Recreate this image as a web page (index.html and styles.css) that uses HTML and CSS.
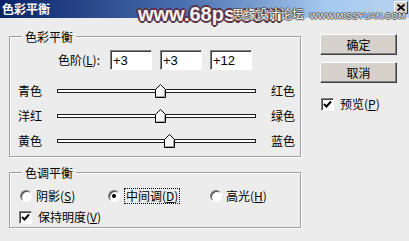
FILE: index.html
```html
<!DOCTYPE html>
<html lang="zh-CN">
<head>
    <meta charset="UTF-8">
    <title>色彩平衡</title>
    <link rel="stylesheet" href="styles.css">
</head>
<body>

<div class="dialog">
    <div class="titlebar">
        <span class="title">色彩平衡</span>
        <span class="close">
            <svg width="8" height="7" viewBox="0 0 8 7"><path d="M0.5 0.5 L7.5 6.5 M7.5 0.5 L0.5 6.5" stroke="#000" stroke-width="1.8"/></svg>
        </span>
    </div>

    <div class="watermark">www.68ps.com</div>
    <div class="watermark-small">思缘设计论坛 <span class="site">WWW.MISSYUAN.COM</span></div>

    <div class="content">
        <div class="main">
            <div class="group balance">
                <span class="group-title">色彩平衡</span>
                <div class="levels">
                    <span class="levels-label">色阶(<u>L</u>):</span>
                    <input class="field" type="text" value="+3">
                    <input class="field" type="text" value="+3">
                    <input class="field" type="text" value="+12">
                </div>
                <div class="slider-row">
                    <span class="lbl-left">青色</span>
                    <div class="track"><span class="thumb" style="left: 97px;"><svg width="11" height="14" viewBox="0 0 11 14"><polygon points="5.5,0.5 10.5,5.5 10.5,13.5 0.5,13.5 0.5,5.5" fill="#f7f7f7" stroke="#000"/><polyline points="9.5,6 9.5,12.5 1.5,12.5" fill="none" stroke="#a0a0a0"/></svg></span></div>
                    <span class="lbl-right">红色</span>
                </div>
                <div class="slider-row">
                    <span class="lbl-left">洋红</span>
                    <div class="track"><span class="thumb" style="left: 97px;"><svg width="11" height="14" viewBox="0 0 11 14"><polygon points="5.5,0.5 10.5,5.5 10.5,13.5 0.5,13.5 0.5,5.5" fill="#f7f7f7" stroke="#000"/><polyline points="9.5,6 9.5,12.5 1.5,12.5" fill="none" stroke="#a0a0a0"/></svg></span></div>
                    <span class="lbl-right">绿色</span>
                </div>
                <div class="slider-row">
                    <span class="lbl-left">黄色</span>
                    <div class="track"><span class="thumb" style="left: 106px;"><svg width="11" height="14" viewBox="0 0 11 14"><polygon points="5.5,0.5 10.5,5.5 10.5,13.5 0.5,13.5 0.5,5.5" fill="#f7f7f7" stroke="#000"/><polyline points="9.5,6 9.5,12.5 1.5,12.5" fill="none" stroke="#a0a0a0"/></svg></span></div>
                    <span class="lbl-right">蓝色</span>
                </div>
            </div>

            <div class="group tone">
                <span class="group-title">色调平衡</span>
                <div class="tones">
                    <label class="option"><span class="radio"></span>阴影(<u>S</u>)</label>
                    <label class="option"><span class="radio checked"></span><span class="focus">中间调(<u>D</u>)</span></label>
                    <label class="option"><span class="radio"></span>高光(<u>H</u>)</label>
                </div>
                <label class="option keep"><span class="checkbox checked"><svg width="9" height="9" viewBox="0 0 9 9"><path d="M1 4 L3.5 6.5 L8 1.5" fill="none" stroke="#000" stroke-width="2"/></svg></span>保持明度(<u>V</u>)</label>
            </div>
        </div>

        <div class="side">
            <button class="btn">确定</button>
            <button class="btn">取消</button>
            <label class="option preview"><span class="checkbox checked"><svg width="9" height="9" viewBox="0 0 9 9"><path d="M1 4 L3.5 6.5 L8 1.5" fill="none" stroke="#000" stroke-width="2"/></svg></span>预览(<u>P</u>)</label>
        </div>
    </div>
</div>

</body>
</html>
```

FILE: styles.css
```css
body {
    margin: 0;
    padding: 0;
    background-color: #ececec;
    font-family: "Noto Sans CJK SC", "Liberation Sans", sans-serif;
    font-size: 12px;
    color: #000;
}
.dialog {
    position: relative;
    width: 409px;
    height: 241px;
    overflow: hidden;
    background-color: #ececec;
}
.titlebar {
    height: 18px;
    display: flex;
    align-items: center;
    justify-content: space-between;
    padding: 0 1px 0 2px;
    background: linear-gradient(to right, #0a246a, #4a6fae 45%, #a6caf0 80%, #b8d2ee);
}
.title {
    color: #fff;
    font-weight: bold;
    font-size: 12px;
    line-height: 18px;
}
.close {
    width: 14px;
    height: 13px;
    box-sizing: border-box;
    display: flex;
    align-items: center;
    justify-content: center;
    background-color: #d4d0c8;
    border: 1px solid;
    border-color: #fff #404040 #404040 #fff;
    margin-top: -3px;
}

/* watermark over the title bar */
.watermark {
    position: absolute;
    left: 138px;
    top: 4px;
    font-family: "Liberation Sans", Arial, sans-serif;
    font-weight: bold;
    font-size: 20px;
    line-height: 20px;
    color: #f6f2f2;
    text-shadow: 2px 0 #5a3446, -2px 0 #5a3446, 0 2px #5a3446, 0 -2px #5a3446,
        1px 1px #5a3446, -1px -1px #5a3446, 1px -1px #5a3446, -1px 1px #5a3446;
}
.watermark-small {
    position: absolute;
    left: 232px;
    top: 7px;
    font-size: 12px;
    line-height: 14px;
    color: #f2f2f2;
    text-shadow: 1px 0 #555, -1px 0 #555, 0 1px #555, 0 -1px #555;
}
.watermark-small .site {
    margin-left: 3px;
    font-family: "Liberation Sans", Arial, sans-serif;
    font-size: 8.5px;
    letter-spacing: 0.2px;
}

.content {
    display: flex;
}
.main {
    width: 292px;
    padding: 18px 0 0 9px;
}
.group {
    position: relative;
    box-sizing: border-box;
    border: 1px solid #a0a0a0;
    box-shadow: inset 1px 1px #fff, 1px 1px #fff;
}
.group-title {
    position: absolute;
    top: -8px;
    left: 12px;
    padding: 0 3px;
    line-height: 15px;
    background-color: #ececec;
}
.balance {
    height: 121px;
    padding: 13px 0 3px 0;
}
.levels {
    display: flex;
    align-items: center;
    height: 20px;
    padding-left: 48px;
}
.levels-label {
    width: 52px;
    line-height: 14px;
}
.field {
    box-sizing: border-box;
    width: 42px;
    height: 20px;
    margin: 0 8px 0 0;
    padding: 0 2px;
    border: 1px solid;
    border-color: #808080 #fff #fff #808080;
    box-shadow: inset 1px 1px #404040;
    background-color: #fff;
    font-family: "Liberation Sans", Arial, sans-serif;
    font-size: 13px;
    outline: none;
}
.slider-row {
    display: flex;
    align-items: center;
    height: 25px;
    padding-left: 8px;
}
.slider-row:first-of-type {
    margin-top: 8px;
}
.levels + .slider-row {
    margin-top: 8px;
}
.lbl-left {
    width: 39px;
    line-height: 14px;
}
.track {
    position: relative;
    width: 197px;
    height: 2px;
    border: 1px solid #1e1e1e;
    background-color: #fff;
}
.thumb {
    position: absolute;
    top: -6px;
    width: 11px;
    height: 14px;
}
.thumb svg {
    display: block;
}
.lbl-right {
    margin-left: 15px;
    line-height: 14px;
}

.tone {
    height: 56px;
    margin-top: 15px;
    padding: 15px 0 0 10px;
}
.tones {
    display: grid;
    grid-template-columns: 88px 102px auto;
    height: 16px;
    align-items: center;
}
.option {
    display: flex;
    align-items: center;
    line-height: 14px;
}
.radio {
    box-sizing: border-box;
    width: 12px;
    height: 12px;
    margin-right: 4px;
    border-radius: 50%;
    border: 1px solid;
    border-color: #808080 #fff #fff #808080;
    box-shadow: inset 1px 1px #404040;
    background-color: #fff;
    display: flex;
    align-items: center;
    justify-content: center;
}
.radio.checked::after {
    content: "";
    width: 4px;
    height: 4px;
    border-radius: 50%;
    background-color: #000;
}
.focus {
    padding: 0 1px;
    border: 1px dotted #000;
}
.checkbox {
    box-sizing: border-box;
    width: 13px;
    height: 13px;
    border: 1px solid;
    border-color: #808080 #fff #fff #808080;
    box-shadow: inset 1px 1px #404040;
    background-color: #fff;
    display: flex;
    align-items: center;
    justify-content: center;
}
.keep {
    height: 16px;
    margin-top: 5px;
}
.keep .checkbox {
    margin: 0 6px 0 -1px;
}

.side {
    width: 77px;
    margin-left: 19px;
    padding-top: 16px;
    display: flex;
    flex-direction: column;
}
.btn {
    box-sizing: border-box;
    width: 77px;
    height: 21px;
    margin: 0 0 7px 0;
    padding: 0;
    background-color: #d6d2cb;
    border: 1px solid;
    border-color: #fff #404040 #404040 #fff;
    box-shadow: inset -1px -1px #808080;
    font-family: "Noto Sans CJK SC", sans-serif;
    font-size: 12px;
    line-height: 17px;
}
.preview {
    margin-top: 7px;
    padding-left: 1px;
}
.preview .checkbox {
    margin-right: 6px;
}
```
